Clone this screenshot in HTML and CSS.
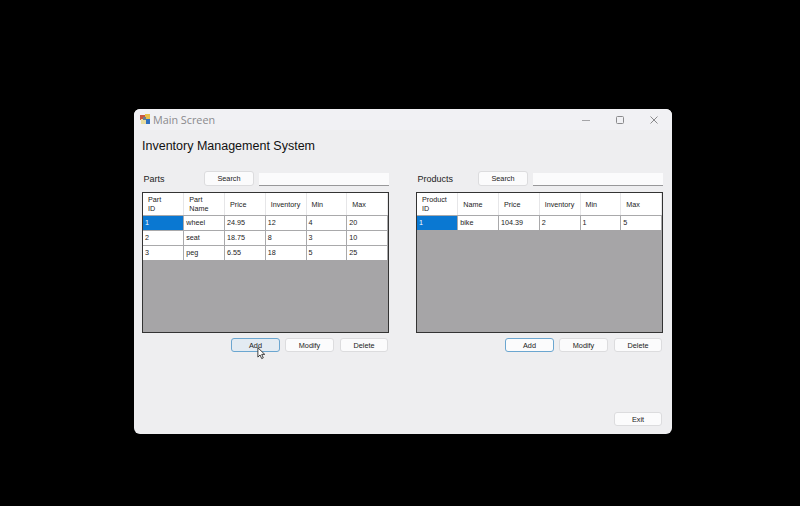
FILE: index.html
```html
<!DOCTYPE html>
<html lang="en">
<head>
    <meta charset="UTF-8">
    <meta name="viewport" content="width=device-width, initial-scale=1.0">
    <title>Main Screen</title>
    <link rel="stylesheet" href="styles.css">
</head>
<body>
<div class="window">
    <div class="titlebar">
        <svg class="app-icon" width="11" height="11" viewBox="0 0 11 11">
            <rect x="0" y="1" width="5" height="5" fill="#c9563c"/>
            <rect x="5" y="0" width="5" height="5" fill="#e8c04a"/>
            <rect x="1" y="5" width="5" height="5" fill="#e9dca0"/>
            <rect x="6" y="5" width="4" height="5" fill="#2f6fc0"/>
            <rect x="3" y="3" width="3" height="3" fill="#6d7f8f"/>
        </svg>
        <span class="window-title">Main Screen</span>
        <div class="window-controls">
            <svg width="8" height="8" viewBox="0 0 8 8"><path d="M0 4.500h8" stroke="#a5a5a8" fill="none"/></svg>
            <svg width="8" height="8" viewBox="0 0 8 8"><rect x=".5" y=".5" width="7" height="7" rx="1" stroke="#8a8a8d" fill="none"/></svg>
            <svg width="8" height="8" viewBox="0 0 8 8"><path d="M.5.5l7 7M7.500.5l-7 7" stroke="#8a8a8d" fill="none"/></svg>
        </div>
    </div>

    <h1>Inventory Management System</h1>

    <div class="panels">
        <section class="panel">
            <div class="panel-head">
                <label class="panel-label" for="partSearch">Parts</label>
                <button type="button" class="btn">Search</button>
                <input type="text" id="partSearch" class="search">
            </div>
            <div class="grid">
                <table>
                    <thead>
                        <tr><th>Part<br>ID</th><th>Part<br>Name</th><th>Price</th><th>Inventory</th><th>Min</th><th>Max</th></tr>
                    </thead>
                    <tbody>
                        <tr><td class="selected">1</td><td>wheel</td><td>24.95</td><td>12</td><td>4</td><td>20</td></tr>
                        <tr><td>2</td><td>seat</td><td>18.75</td><td>8</td><td>3</td><td>10</td></tr>
                        <tr><td>3</td><td>peg</td><td>6.55</td><td>18</td><td>5</td><td>25</td></tr>
                    </tbody>
                </table>
            </div>
            <div class="actions">
                <button type="button" class="btn btn-hover">Add</button>
                <button type="button" class="btn">Modify</button>
                <button type="button" class="btn">Delete</button>
                <svg class="cursor" width="9" height="13" viewBox="0 0 12 18">
                    <path d="M1 1v13l3-3 2.200 5 2.300-1-2.200-4.800H10.500z" fill="#fff" stroke="#333" stroke-width="1.300"/>
                </svg>
            </div>
        </section>

        <section class="panel">
            <div class="panel-head">
                <label class="panel-label" for="productSearch">Products</label>
                <button type="button" class="btn">Search</button>
                <input type="text" id="productSearch" class="search">
            </div>
            <div class="grid">
                <table>
                    <thead>
                        <tr><th>Product<br>ID</th><th>Name</th><th>Price</th><th>Inventory</th><th>Min</th><th>Max</th></tr>
                    </thead>
                    <tbody>
                        <tr><td class="selected">1</td><td>bike</td><td>104.39</td><td>2</td><td>1</td><td>5</td></tr>
                    </tbody>
                </table>
            </div>
            <div class="actions">
                <button type="button" class="btn btn-default">Add</button>
                <button type="button" class="btn">Modify</button>
                <button type="button" class="btn">Delete</button>
            </div>
        </section>
    </div>

    <div class="footer">
        <button type="button" class="btn">Exit</button>
    </div>
</div>
</body>
</html>
```

FILE: styles.css
```css
html, body {
    height: 100%;
}
body {
    margin: 0;
    background: #000;
    font-family: "Liberation Sans", Arial, sans-serif;
    overflow: hidden;
}
.window {
    width: 538px;
    height: 325px;
    margin: 109px 0 0 134px;
    background: #eeeef0;
    border-radius: 6px;
    box-sizing: border-box;
    color: #111;
}
.titlebar {
    display: flex;
    align-items: center;
    height: 21px;
    padding: 0 14px 0 6px;
    background: #f1f1f4;
    border-radius: 6px 6px 0 0;
}
.app-icon {
    margin-right: 2px;
}
.window-title {
    font-family: "Open Sans", sans-serif;
    font-size: 10.800px;
    color: #8a8a8d;
}
.window-controls {
    display: flex;
    gap: 26px;
    margin-left: auto;
}
h1 {
    margin: 8px 0 0 8px;
    height: 16px;
    font-size: 12.500px;
    line-height: 16px;
    font-weight: normal;
    color: #111;
}
.panels {
    display: flex;
    gap: 27px;
    margin: 17px 0 0 8px;
}
.panel {
    position: relative;
    width: 247px;
}
.panel-head {
    display: flex;
    height: 15px;
}
.panel-label {
    width: 62px;
    padding-left: 1.500px;
    box-sizing: border-box;
    align-self: center;
    font-size: 9px;
    color: #222;
}
.btn {
    width: 49px;
    height: 14px;
    padding: 0;
    background: #fbfbfc;
    border: 1px solid #dcdcde;
    border-radius: 3px;
    font-family: "Liberation Sans", Arial, sans-serif;
    font-size: 7.300px;
    color: #222;
}
.panel-head .btn {
    width: 50px;
    height: 15px;
    margin-right: 5px;
}
.search {
    width: 130px;
    height: 13px;
    margin-top: 2px;
    padding: 0;
    box-sizing: border-box;
    background: #fbfbfc;
    border: 0;
    border-bottom: 1px solid #98989a;
}
.grid {
    height: 141px;
    margin-top: 6px;
    box-sizing: border-box;
    background: #a6a5a7;
    border: 1px solid #333;
    overflow: hidden;
}
table {
    width: 245px;
    table-layout: fixed;
    border-collapse: collapse;
    font-size: 7.200px;
}
th, td {
    padding: 0 0 0 2px;
    text-align: left;
    font-weight: normal;
    color: #222;
    background: #fff;
    border-right: 1px solid #a9a9ab;
    overflow: hidden;
    white-space: nowrap;
}
th {
    height: 22px;
    padding-left: 5px;
    line-height: 9px;
    border-right-color: #e6e6e8;
    border-bottom: 1px solid #a9a9ab;
}
td {
    height: 14px;
    line-height: 14px;
    border-bottom: 1px solid #a9a9ab;
}
tr:last-child td {
    border-bottom: 0;
}
td.selected {
    background: #0a78d2;
    color: #fff;
}
.actions {
    display: flex;
    justify-content: flex-end;
    gap: 5px;
    margin: 5px 1px 0 0;
}
.actions .btn:last-of-type {
    width: 48px;
    margin-left: 1px;
}
.btn-hover {
    background: #e3ebf2;
    border-color: #6ba6d0;
}
.btn-default {
    background: #fbfbfc;
    border-color: #6ba6d0;
}
.cursor {
    position: absolute;
    left: 115px;
    top: 176px;
}
.footer {
    display: flex;
    justify-content: flex-end;
    margin: 60px 10px 0 0;
}
.footer .btn {
    width: 48px;
}
```
